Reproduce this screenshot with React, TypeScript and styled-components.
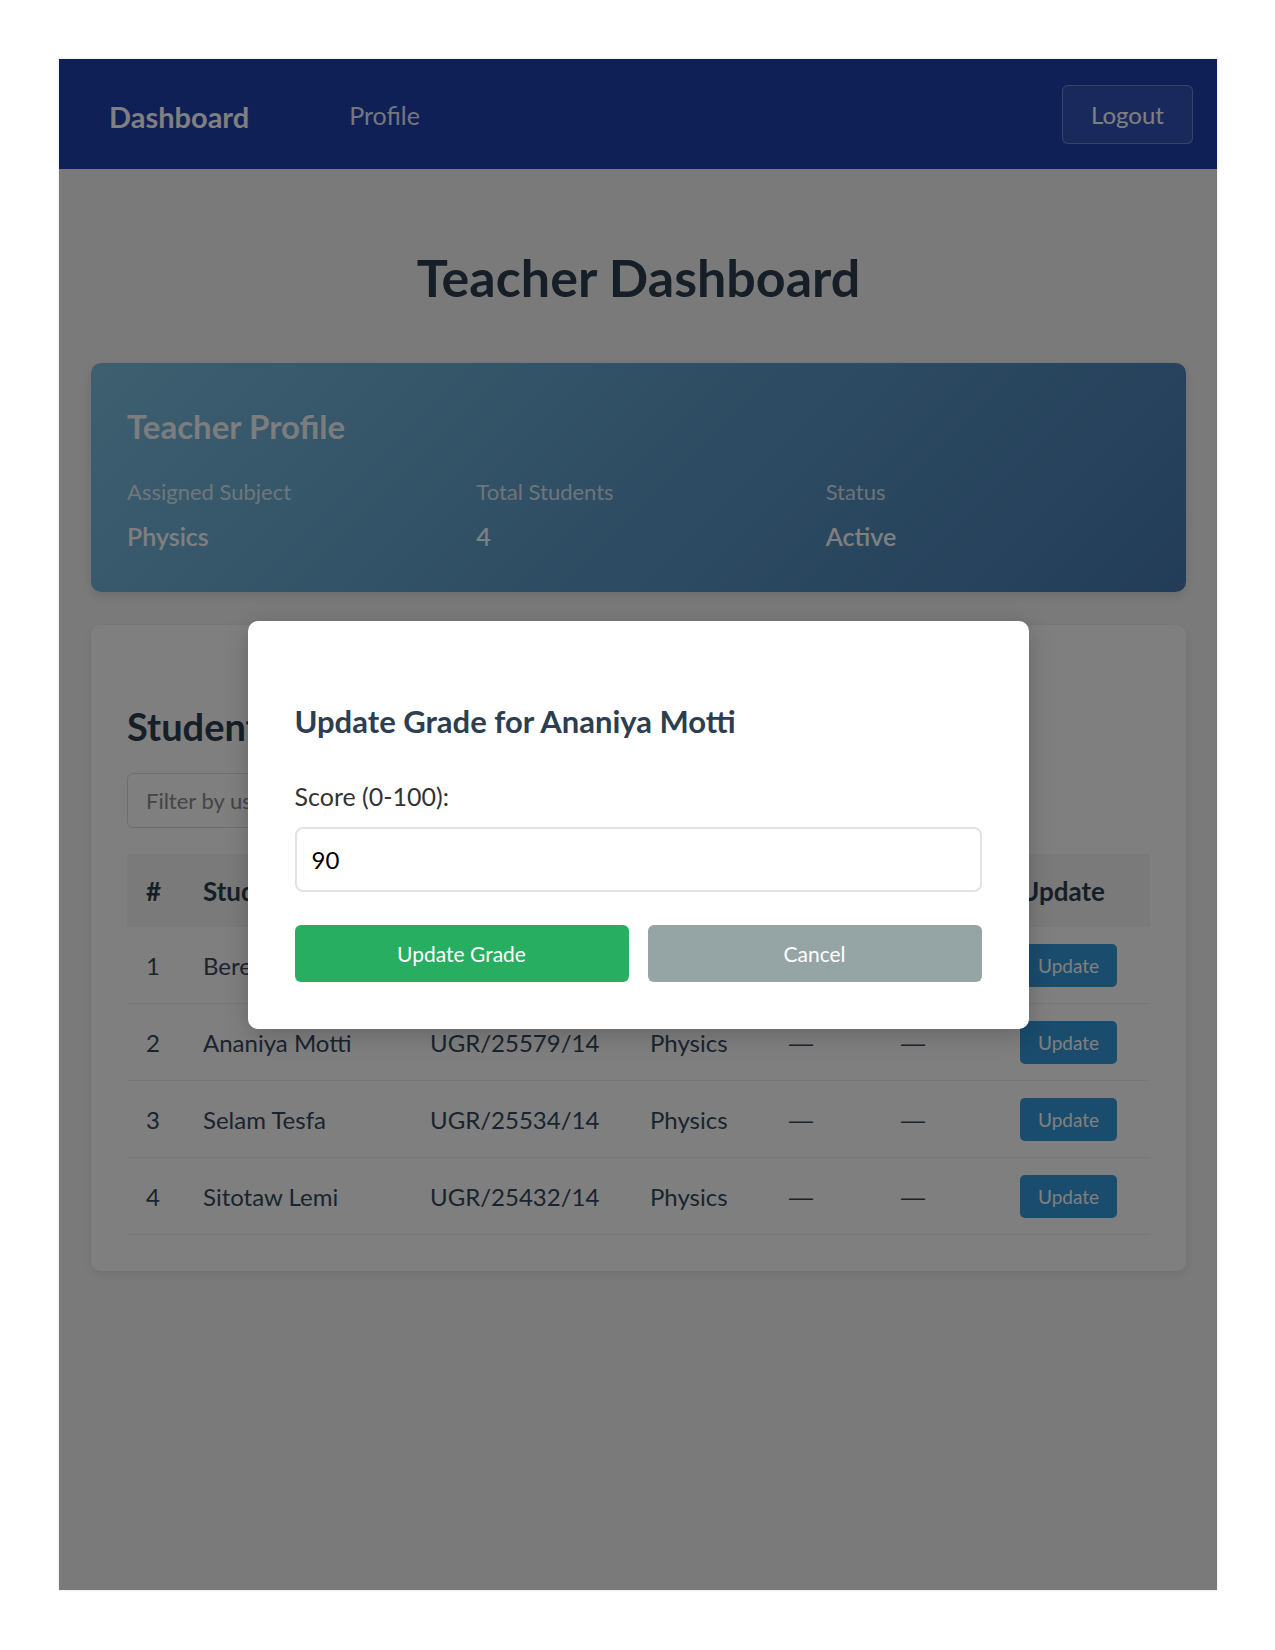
import React from "react";
import styled, { createGlobalStyle } from "styled-components";

const Global = createGlobalStyle`
  html, body { margin: 0; padding: 0; background: #ffffff; }
  body { font-family: Lato, "Open Sans", sans-serif; }
  * { box-sizing: border-box; }
`;

const Page = styled.div`
  padding: 59px 59px 60px;
`;

const Frame = styled.div`
  position: relative;
  width: 1158px;
  height: 1531px;
  background: #f5f5f5;
  overflow: hidden;
  box-shadow: 0 0 2px rgba(0, 0, 0, 0.18);
`;

const Nav = styled.nav`
  height: 110px;
  background: #1e40af;
  display: flex;
  align-items: center;
  padding: 0 24px 0 50px;
`;

const Brand = styled.a`
  font-size: 29px;
  font-weight: 700;
  color: #ffffff;
  text-decoration: none;
  padding-top: 4px;
`;

const NavLink = styled.a`
  margin-left: 100px;
  font-size: 25px;
  color: rgba(255, 255, 255, 0.92);
  text-decoration: none;
  padding-top: 2px;
`;

const LogoutButton = styled.button`
  margin-left: auto;
  width: 131px;
  height: 59px;
  border: 1px solid rgba(255, 255, 255, 0.3);
  background: rgba(255, 255, 255, 0.1);
  color: #ffffff;
  border-radius: 6px;
  font-family: inherit;
  font-size: 24px;
`;

const Main = styled.main`
  padding: 0 31px 0 32px;
`;

const Title = styled.h1`
  margin: 76px 0 54px;
  line-height: 64px;
  font-size: 52px;
  font-weight: 700;
  color: #2c3e50;
  text-align: center;
`;

const ProfileCard = styled.section`
  height: 229px;
  border-radius: 10px;
  padding: 45px 36px 0;
  background: linear-gradient(135deg, #7bbfe0 0%, #5d9bc8 50%, #467ab2 100%);
  box-shadow: 0 4px 12px rgba(0, 0, 0, 0.12);
`;

const CardTitle = styled.h2`
  margin: 0;
  font-size: 33px;
  line-height: 36px;
  font-weight: 700;
  color: rgba(255, 255, 255, 0.96);
`;

const InfoGrid = styled.div`
  display: grid;
  grid-template-columns: repeat(3, 1fr);
  column-gap: 25px;
  margin-top: 34px;
`;

const InfoItem = styled.div`
  display: flex;
  flex-direction: column;
  gap: 15px;
`;

const InfoLabel = styled.span`
  font-size: 22px;
  line-height: 28px;
  color: rgba(255, 255, 255, 0.78);
`;

const InfoValue = styled.span`
  font-size: 25px;
  line-height: 30px;
  font-weight: 600;
  color: #ffffff;
`;

const StudentsCard = styled.section`
  margin-top: 33px;
  height: 646px;
  background: #ffffff;
  border-radius: 10px;
  padding: 78px 36px 0;
  box-shadow: 0 4px 12px rgba(0, 0, 0, 0.08);
`;

const SectionTitle = styled.h2`
  margin: 0;
  font-size: 38px;
  line-height: 46px;
  font-weight: 700;
  color: #2c3e50;
`;

const FilterInput = styled.input`
  display: block;
  margin-top: 24px;
  width: 360px;
  height: 55px;
  padding: 0 18px;
  border: 1px solid #dddddd;
  border-radius: 6px;
  font-family: inherit;
  font-size: 22px;
  color: #333;
  &::placeholder { color: #8a8a8a; }
`;

const Table = styled.div`
  margin-top: 26px;
  display: flex;
  flex-direction: column;
`;

const Row = styled.div<{ $head?: boolean }>`
  display: grid;
  grid-template-columns: 57px 227px 220px 139px 112px 119px 1fr;
  align-items: center;
  height: ${(p) => (p.$head ? "73px" : "77px")};
  background: ${(p) => (p.$head ? "#f5f5f5" : "transparent")};
  border-bottom: ${(p) => (p.$head ? "none" : "1px solid #eeeeee")};
`;

const Cell = styled.div<{ $head?: boolean }>`
  padding-left: 19px;
  font-size: ${(p) => (p.$head ? "26px" : "24px")};
  font-weight: ${(p) => (p.$head ? 700 : 400)};
  color: ${(p) => (p.$head ? "#2c3e50" : "#34495e")};
  white-space: nowrap;
  overflow: hidden;
`;

const Dash = styled.span`
  font-family: "Liberation Sans", Arial, sans-serif;
  font-size: 24px;
`;

const SmallButton = styled.button`
  width: 97px;
  height: 43px;
  border: none;
  border-radius: 5px;
  background: #3498db;
  color: #ffffff;
  font-family: inherit;
  font-size: 19px;
`;

const Overlay = styled.div`
  position: absolute;
  inset: 0;
  background: rgba(0, 0, 0, 0.5);
  display: flex;
  align-items: center;
  justify-content: center;
`;

const Modal = styled.div`
  width: 781px;
  height: 408px;
  background: #ffffff;
  border-radius: 10px;
  padding: 82px 47px 0;
  display: flex;
  flex-direction: column;
  box-shadow: 0 6px 24px rgba(0, 0, 0, 0.2);
`;

const ModalTitle = styled.h3`
  margin: 0;
  font-size: 31px;
  line-height: 36px;
  font-weight: 700;
  color: #2c3e50;
`;

const FieldLabel = styled.label`
  margin-top: 42px;
  font-size: 25px;
  line-height: 30px;
  color: #333333;
`;

const ScoreInput = styled.input`
  margin-top: 16px;
  height: 65px;
  width: 100%;
  padding: 0 15px;
  border: 2px solid #e2e2e2;
  border-radius: 8px;
  font-family: inherit;
  font-size: 24px;
  color: #000;
`;

const ButtonRow = styled.div`
  margin-top: 33px;
  display: grid;
  grid-template-columns: 1fr 1fr;
  gap: 19px;
`;

const ModalButton = styled.button<{ $tone: "primary" | "muted" }>`
  height: 57px;
  border: none;
  border-radius: 6px;
  background: ${(p) => (p.$tone === "primary" ? "#27ae60" : "#95a5a6")};
  color: #ffffff;
  font-family: inherit;
  font-size: 21px;
`;

const students = [
  { id: 1, name: "Bereket Alemu", username: "UGR/25601/14" },
  { id: 2, name: "Ananiya Motti", username: "UGR/25579/14" },
  { id: 3, name: "Selam Tesfa", username: "UGR/25534/14" },
  { id: 4, name: "Sitotaw Lemi", username: "UGR/25432/14" },
];

export default function App() {
  return (
    <>
      <Global />
      <Page>
        <Frame>
          <Nav>
            <Brand>Dashboard</Brand>
            <NavLink>Profile</NavLink>
            <LogoutButton>Logout</LogoutButton>
          </Nav>
          <Main>
            <Title>Teacher Dashboard</Title>
            <ProfileCard>
              <CardTitle>Teacher Profile</CardTitle>
              <InfoGrid>
                <InfoItem>
                  <InfoLabel>Assigned Subject</InfoLabel>
                  <InfoValue>Physics</InfoValue>
                </InfoItem>
                <InfoItem>
                  <InfoLabel>Total Students</InfoLabel>
                  <InfoValue>4</InfoValue>
                </InfoItem>
                <InfoItem>
                  <InfoLabel>Status</InfoLabel>
                  <InfoValue>Active</InfoValue>
                </InfoItem>
              </InfoGrid>
            </ProfileCard>
            <StudentsCard>
              <SectionTitle>Student Grades</SectionTitle>
              <FilterInput placeholder="Filter by username..." />
              <Table>
                <Row $head>
                  <Cell $head>#</Cell>
                  <Cell $head>Student Name</Cell>
                  <Cell $head>Username</Cell>
                  <Cell $head>Subject</Cell>
                  <Cell $head>Score</Cell>
                  <Cell $head>Grade</Cell>
                  <Cell $head>Update</Cell>
                </Row>
                {students.map((s) => (
                  <Row key={s.id}>
                    <Cell>{s.id}</Cell>
                    <Cell>{s.name}</Cell>
                    <Cell>{s.username}</Cell>
                    <Cell>Physics</Cell>
                    <Cell>
                      <Dash>—</Dash>
                    </Cell>
                    <Cell>
                      <Dash>—</Dash>
                    </Cell>
                    <Cell>
                      <SmallButton>Update</SmallButton>
                    </Cell>
                  </Row>
                ))}
              </Table>
            </StudentsCard>
          </Main>
          <Overlay>
            <Modal>
              <ModalTitle>Update Grade for Ananiya Motti</ModalTitle>
              <FieldLabel>Score (0-100):</FieldLabel>
              <ScoreInput defaultValue="90" />
              <ButtonRow>
                <ModalButton $tone="primary">Update Grade</ModalButton>
                <ModalButton $tone="muted">Cancel</ModalButton>
              </ButtonRow>
            </Modal>
          </Overlay>
        </Frame>
      </Page>
    </>
  );
}
